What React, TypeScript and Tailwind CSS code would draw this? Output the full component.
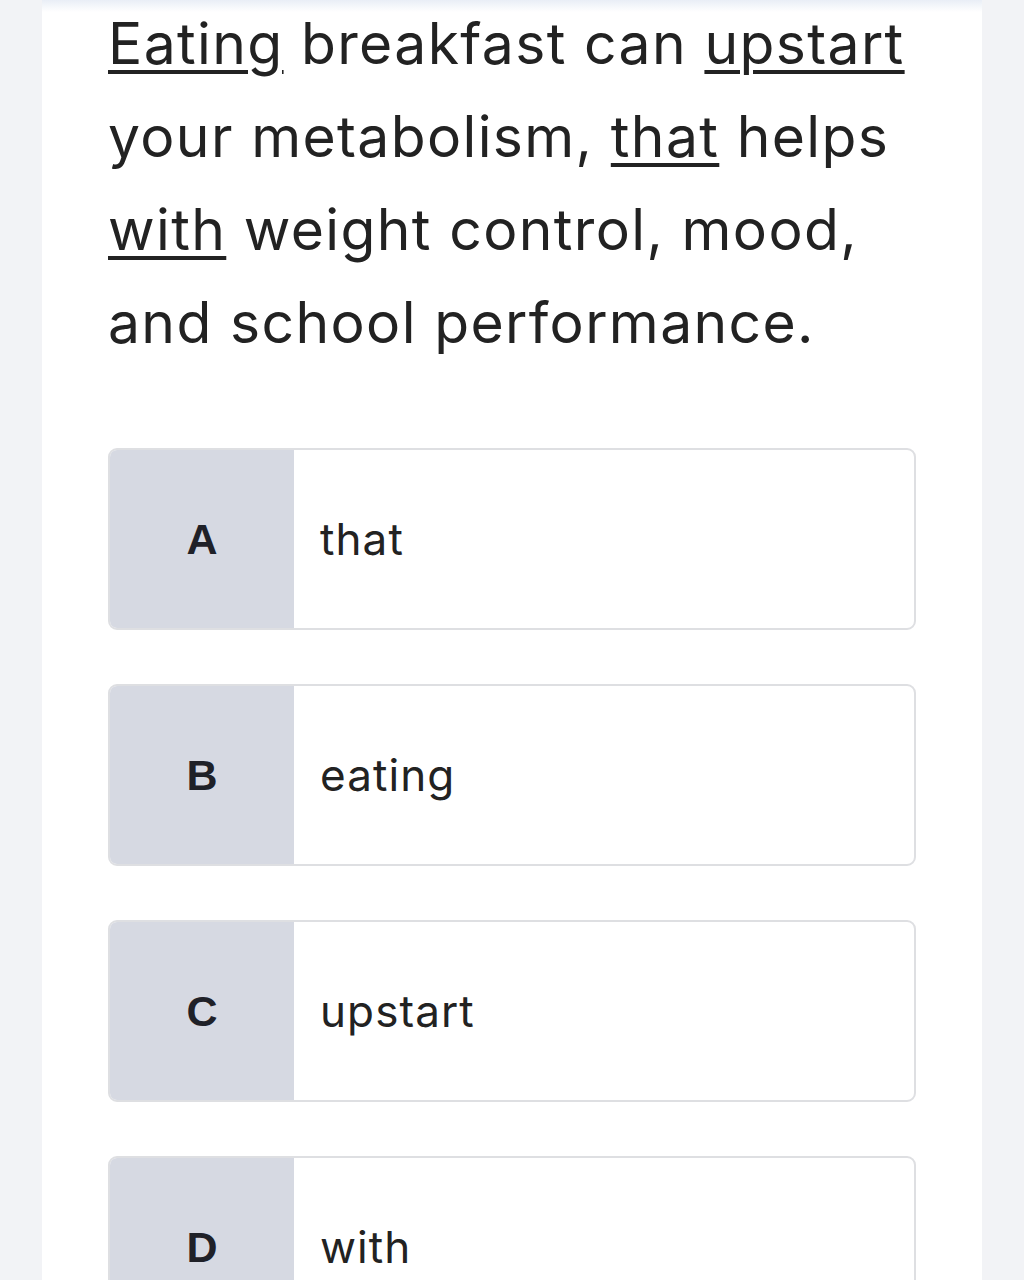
import React from "react";

const options = [
  { letter: "A", text: "that" },
  { letter: "B", text: "eating" },
  { letter: "C", text: "upstart" },
  { letter: "D", text: "with" },
];

function U({ children }: { children: React.ReactNode }) {
  return (
    <span className="underline decoration-[4px] underline-offset-[6px]">{children}</span>
  );
}

export default function App() {
  return (
    <div className="w-[1024px] h-[1280px] overflow-hidden bg-[#f2f3f6] flex justify-center">
      <div className="relative w-[940px] h-full bg-white px-[66px]">
        <div className="absolute left-0 right-0 top-0 h-[12px] bg-gradient-to-b from-[#e9eef6] to-white" />
        <p className="relative h-[372px] -mt-[3px] text-[57px] leading-[93px] text-[#222222] font-['Inter',sans-serif] tracking-[0.024em]">
          <U>Eating</U> breakfast can <U>upstart</U> your metabolism, <U>that</U> helps <U>with</U> weight control, mood, and school performance.
        </p>
        <div className="mt-[79px] flex flex-col gap-[54px]">
          {options.map((o) => (
            <div
              key={o.letter}
              className="flex h-[182px] rounded-[9px] border-2 border-[#dedfe2] overflow-hidden"
            >
              <div className="w-[184px] shrink-0 bg-[#d6d9e2] flex items-center justify-center text-[43px] font-bold text-[#1f2128] font-['Liberation_Sans',sans-serif]">
                {o.letter}
              </div>
              <div className="flex-1 flex items-center pl-[26px] text-[44px] text-[#222222] font-['Inter',sans-serif] tracking-[0.025em]">
                {o.text}
              </div>
            </div>
          ))}
        </div>
      </div>
    </div>
  );
}
